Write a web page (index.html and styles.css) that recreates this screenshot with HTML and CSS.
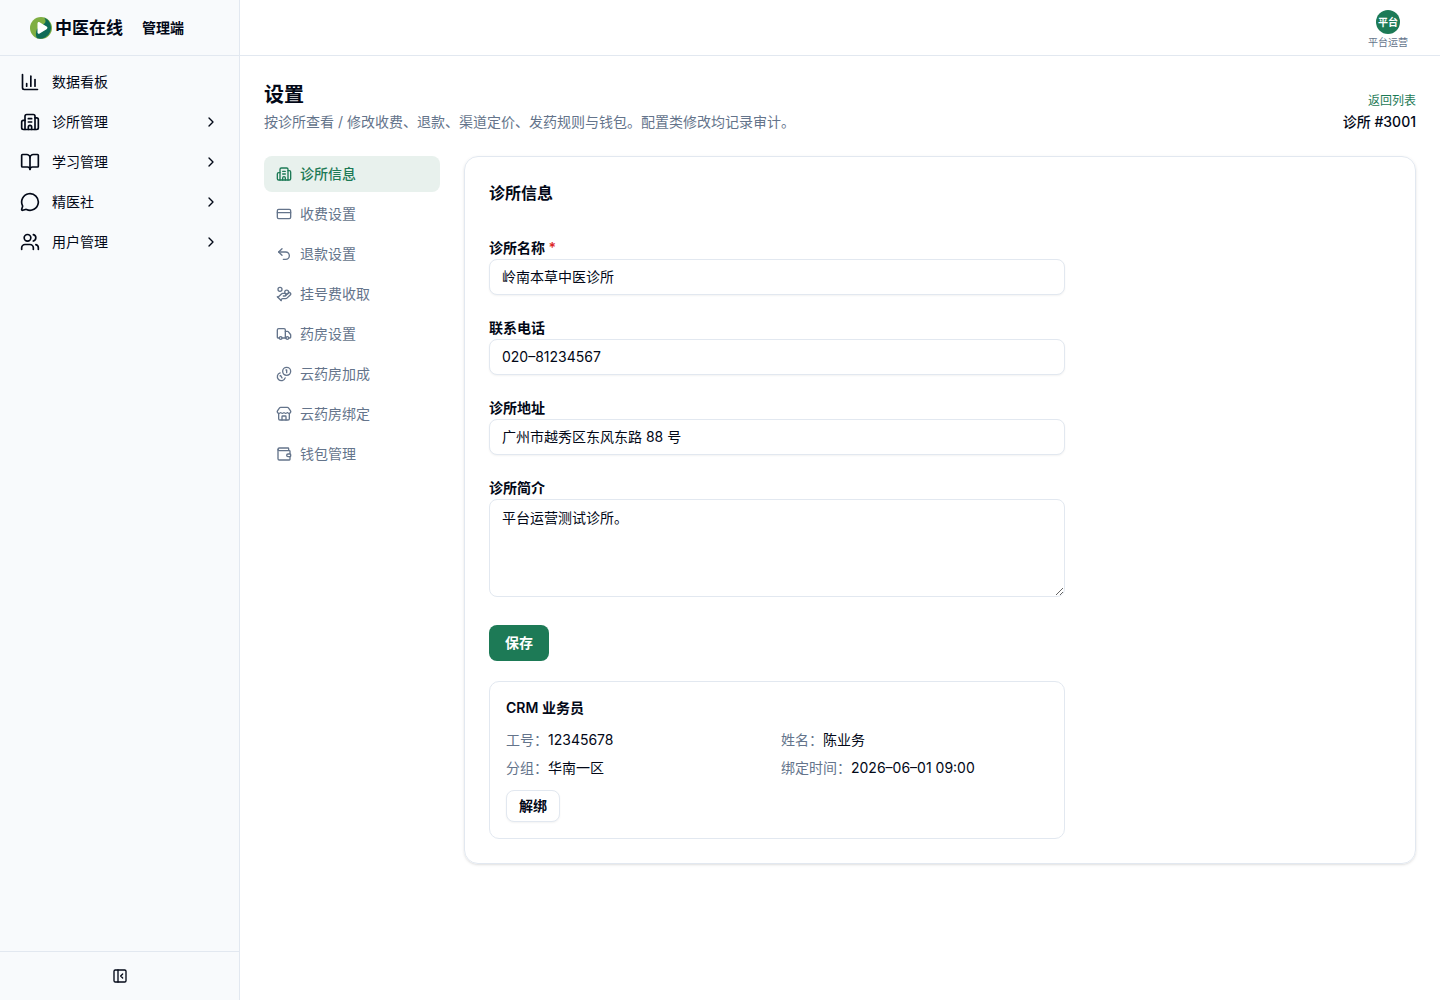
FILE: index.html
```html
<!DOCTYPE html>
<html lang="zh-CN">
<head>
<meta charset="utf-8">
<meta name="viewport" content="width=device-width, initial-scale=1">
<title>设置 - 中医在线管理端</title>
<link rel="stylesheet" href="styles.css">
</head>
<body>
<div class="app">
  <aside class="sidebar">
    <div class="brand">
      <svg class="brand-mark" viewBox="0 0 22 22" aria-hidden="true">
        <circle cx="11" cy="11" r="11" fill="#7fae42"/>
        <path d="M14 .42A11 11 0 0 1 7 21.250C5.400 18.500 5.600 15 7 12L15 6C16 4 15.500 2 14 .42Z" fill="#0f6b56"/>
        <path d="M7.500 6.600c0-1.300 1-1.900 2.100-1.300l7 4.200c1.100.7 1.100 2 0 2.700l-7 4.300c-1.100.6-2.100 0-2.100-1.300Z" fill="#fff"/>
      </svg>
      <span class="brand-name">中医在线</span>
      <span class="brand-role">管理端</span>
    </div>
    <nav class="menu" aria-label="主菜单">
      <a class="menu-item" href="#dashboard">
        <svg class="icon icon-lg" viewBox="0 0 24 24" aria-hidden="true"><path d="M3 3v16a2 2 0 0 0 2 2h16"/><path d="M18 17V9"/><path d="M13 17V5"/><path d="M8 17v-3"/></svg>
        <span class="menu-label">数据看板</span>
      </a>
      <button class="menu-item" type="button">
        <svg class="icon icon-lg" viewBox="0 0 24 24" aria-hidden="true"><path d="M10 12h4"/><path d="M10 8h4"/><path d="M14 21v-3a2 2 0 0 0-4 0v3"/><path d="M6 10H4a2 2 0 0 0-2 2v7a2 2 0 0 0 2 2h16a2 2 0 0 0 2-2V9a2 2 0 0 0-2-2h-2"/><path d="M6 21V5a2 2 0 0 1 2-2h8a2 2 0 0 1 2 2v16"/></svg>
        <span class="menu-label">诊所管理</span>
        <svg class="icon" viewBox="0 0 24 24" aria-hidden="true"><path d="m9 18 6-6-6-6"/></svg>
      </button>
      <button class="menu-item" type="button">
        <svg class="icon icon-lg" viewBox="0 0 24 24" aria-hidden="true"><path d="M12 7v14"/><path d="M3 18a1 1 0 0 1-1-1V4a1 1 0 0 1 1-1h5a4 4 0 0 1 4 4 4 4 0 0 1 4-4h5a1 1 0 0 1 1 1v13a1 1 0 0 1-1 1h-6a3 3 0 0 0-3 3 3 3 0 0 0-3-3z"/></svg>
        <span class="menu-label">学习管理</span>
        <svg class="icon" viewBox="0 0 24 24" aria-hidden="true"><path d="m9 18 6-6-6-6"/></svg>
      </button>
      <button class="menu-item" type="button">
        <svg class="icon icon-lg" viewBox="0 0 24 24" aria-hidden="true"><path d="M2.992 16.342a2 2 0 0 1 .094 1.167l-1.065 3.290a1 1 0 0 0 1.236 1.168l3.413-.998a2 2 0 0 1 1.099.092 10 10 0 1 0-4.777-4.719"/></svg>
        <span class="menu-label">精医社</span>
        <svg class="icon" viewBox="0 0 24 24" aria-hidden="true"><path d="m9 18 6-6-6-6"/></svg>
      </button>
      <button class="menu-item" type="button">
        <svg class="icon icon-lg" viewBox="0 0 24 24" aria-hidden="true"><path d="M16 21v-2a4 4 0 0 0-4-4H6a4 4 0 0 0-4 4v2"/><path d="M16 3.128a4 4 0 0 1 0 7.744"/><path d="M22 21v-2a4 4 0 0 0-3-3.870"/><circle cx="9" cy="7" r="4"/></svg>
        <span class="menu-label">用户管理</span>
        <svg class="icon" viewBox="0 0 24 24" aria-hidden="true"><path d="m9 18 6-6-6-6"/></svg>
      </button>
    </nav>
    <div class="sidebar-foot">
      <button class="collapse" type="button" aria-label="收起侧栏">
        <svg class="icon" viewBox="0 0 24 24" aria-hidden="true"><rect x="3" y="3" width="18" height="18" rx="2"/><path d="M9 3v18"/><path d="m16 15-3-3 3-3"/></svg>
      </button>
    </div>
  </aside>

  <div class="content">
    <header class="topbar">
      <button class="account" type="button">
        <span class="avatar">平台</span>
        <span class="account-name">平台运营</span>
      </button>
    </header>

    <main class="page">
      <div class="page-head">
        <div class="page-heading">
          <h1 class="page-title">设置</h1>
          <p class="page-desc">按诊所查看 / 修改收费、退款、渠道定价、发药规则与钱包。配置类修改均记录审计。</p>
        </div>
        <div class="page-context">
          <a class="back-link" href="#clinics">返回列表</a>
          <span class="clinic-id">诊所 #3001</span>
        </div>
      </div>

      <div class="settings">
        <nav class="tabs" aria-label="设置分类">
          <a class="tab tab-active" href="#info" aria-current="page">
            <svg class="icon" viewBox="0 0 24 24" aria-hidden="true"><path d="M10 12h4"/><path d="M10 8h4"/><path d="M14 21v-3a2 2 0 0 0-4 0v3"/><path d="M6 10H4a2 2 0 0 0-2 2v7a2 2 0 0 0 2 2h16a2 2 0 0 0 2-2V9a2 2 0 0 0-2-2h-2"/><path d="M6 21V5a2 2 0 0 1 2-2h8a2 2 0 0 1 2 2v16"/></svg>
            <span>诊所信息</span>
          </a>
          <a class="tab" href="#charge">
            <svg class="icon" viewBox="0 0 24 24" aria-hidden="true"><rect x="2" y="5" width="20" height="14" rx="2"/><path d="M2 10h20"/></svg>
            <span>收费设置</span>
          </a>
          <a class="tab" href="#refund">
            <svg class="icon" viewBox="0 0 24 24" aria-hidden="true"><path d="M9 14 4 9l5-5"/><path d="M4 9h10.500a5.500 5.500 0 0 1 5.500 5.500a5.500 5.500 0 0 1-5.500 5.500H11"/></svg>
            <span>退款设置</span>
          </a>
          <a class="tab" href="#registration">
            <svg class="icon" viewBox="0 0 24 24" aria-hidden="true"><path d="M11 15h2a2 2 0 1 0 0-4h-3c-.6 0-1.100.2-1.400.6L3 17"/><path d="m7 21 1.600-1.400c.3-.4.8-.6 1.400-.6h4c1.100 0 2.100-.4 2.800-1.200l4.600-4.400a2 2 0 0 0-2.750-2.910l-4.200 3.900"/><path d="m2 16 6 6"/><circle cx="16" cy="9" r="2.900"/><circle cx="6" cy="5" r="3"/></svg>
            <span>挂号费收取</span>
          </a>
          <a class="tab" href="#pharmacy">
            <svg class="icon" viewBox="0 0 24 24" aria-hidden="true"><path d="M14 18V6a2 2 0 0 0-2-2H4a2 2 0 0 0-2 2v11a1 1 0 0 0 1 1h2"/><path d="M15 18H9"/><path d="M19 18h2a1 1 0 0 0 1-1v-3.650a1 1 0 0 0-.22-.624l-3.480-4.350A1 1 0 0 0 17.520 8H14"/><circle cx="17" cy="18" r="2"/><circle cx="7" cy="18" r="2"/></svg>
            <span>药房设置</span>
          </a>
          <a class="tab" href="#markup">
            <svg class="icon" viewBox="0 0 24 24" aria-hidden="true"><path d="M13.744 17.736a6 6 0 1 1-7.480-7.480"/><path d="M15 6h1v4"/><path d="m6.134 14.768.866-.5 2 3.464"/><circle cx="16" cy="8" r="6"/></svg>
            <span>云药房加成</span>
          </a>
          <a class="tab" href="#binding">
            <svg class="icon" viewBox="0 0 24 24" aria-hidden="true"><path d="M15 21v-5a1 1 0 0 0-1-1h-4a1 1 0 0 0-1 1v5"/><path d="M17.774 10.310a1.120 1.120 0 0 0-1.549 0 2.500 2.500 0 0 1-3.451 0 1.120 1.120 0 0 0-1.548 0 2.500 2.500 0 0 1-3.452 0 1.120 1.120 0 0 0-1.549 0 2.500 2.500 0 0 1-3.770-3.248l2.889-4.184A2 2 0 0 1 7 2h10a2 2 0 0 1 1.653.873l2.895 4.192a2.500 2.500 0 0 1-3.774 3.244"/><path d="M4 10.950V19a2 2 0 0 0 2 2h12a2 2 0 0 0 2-2v-8.050"/></svg>
            <span>云药房绑定</span>
          </a>
          <a class="tab" href="#wallet">
            <svg class="icon" viewBox="0 0 24 24" aria-hidden="true"><path d="M19 7V4a1 1 0 0 0-1-1H5a2 2 0 0 0 0 4h15a1 1 0 0 1 1 1v4h-3a2 2 0 0 0 0 4h3a1 1 0 0 0 1-1v-2a1 1 0 0 0-1-1"/><path d="M3 5v14a2 2 0 0 0 2 2h15a1 1 0 0 0 1-1v-4"/></svg>
            <span>钱包管理</span>
          </a>
        </nav>

        <section class="card">
          <h2 class="card-title">诊所信息</h2>
          <form class="form">
            <div class="field">
              <label class="label" for="clinic-name">诊所名称 <span class="required">*</span></label>
              <input class="input" id="clinic-name" type="text" value="岭南本草中医诊所" required>
            </div>
            <div class="field">
              <label class="label" for="clinic-phone">联系电话</label>
              <input class="input" id="clinic-phone" type="text" value="020–81234567">
            </div>
            <div class="field">
              <label class="label" for="clinic-address">诊所地址</label>
              <input class="input" id="clinic-address" type="text" value="广州市越秀区东风东路 88 号">
            </div>
            <div class="field">
              <label class="label" for="clinic-intro">诊所简介</label>
              <textarea class="input textarea" id="clinic-intro">平台运营测试诊所。</textarea>
            </div>
            <div class="actions">
              <button class="btn btn-primary" type="button">保存</button>
            </div>
          </form>

          <section class="crm">
            <h3 class="crm-title">CRM 业务员</h3>
            <dl class="crm-grid">
              <div class="crm-item"><dt>工号：</dt><dd>12345678</dd></div>
              <div class="crm-item"><dt>姓名：</dt><dd>陈业务</dd></div>
              <div class="crm-item"><dt>分组：</dt><dd>华南一区</dd></div>
              <div class="crm-item"><dt>绑定时间：</dt><dd>2026–06–01 09:00</dd></div>
            </dl>
            <button class="btn btn-outline" type="button">解绑</button>
          </section>
        </section>
      </div>
    </main>
  </div>
</div>
</body>
</html>
```
FILE: styles.css
```css
:root {
  --text: #020817;
  --muted: #64748b;
  --border: #e2e8f0;
  --surface: #f8fafc;
  --primary: #1d7a56;
  --primary-soft: #e8f1ed;
  --danger: #dc2626;
}

*, *::before, *::after { box-sizing: border-box; }

body {
  margin: 0;
  background: #fff;
  color: var(--text);
  font-family: Inter, "Noto Sans CJK SC", sans-serif;
  font-size: 14px;
  line-height: 20px;
}

h1, h2, h3, p, dl, dd { margin: 0; }
a { color: inherit; text-decoration: none; }
button, input, textarea { font: inherit; color: inherit; }
button { border: 0; background: none; padding: 0; cursor: pointer; }

.icon {
  flex: none;
  width: 16px;
  height: 16px;
  fill: none;
  stroke: currentColor;
  stroke-width: 2;
  stroke-linecap: round;
  stroke-linejoin: round;
}
.icon-lg { width: 20px; height: 20px; }

.app { display: flex; min-height: 100vh; }

/* Sidebar */
.sidebar {
  display: flex;
  flex: none;
  flex-direction: column;
  width: 240px;
  background: var(--surface);
  border-right: 1px solid var(--border);
}
.brand {
  display: flex;
  align-items: center;
  height: 56px;
  padding-left: 30px;
  border-bottom: 1px solid var(--border);
}
.brand-mark { width: 22px; height: 22px; margin-right: 3px; }
.brand-name { font-size: 17px; font-weight: 600; margin-right: 19px; }
.brand-role { font-weight: 600; }
.menu {
  display: flex;
  flex: 1;
  flex-direction: column;
  gap: 4px;
  padding: 8px;
}
.menu-item {
  display: flex;
  align-items: center;
  gap: 12px;
  height: 36px;
  padding: 0 12px;
  border-radius: 8px;
  text-align: left;
}
.menu-label { flex: 1; }
.sidebar-foot {
  display: flex;
  justify-content: center;
  padding: 8px;
  border-top: 1px solid var(--border);
}
.collapse { display: grid; place-items: center; width: 32px; height: 32px; }

/* Top bar */
.content { flex: 1; min-width: 0; }
.topbar {
  display: flex;
  align-items: center;
  justify-content: flex-end;
  height: 56px;
  padding: 2px 32px 0;
  border-bottom: 1px solid var(--border);
}
.account { display: flex; flex-direction: column; align-items: center; gap: 2px; }
.avatar {
  display: grid;
  place-items: center;
  width: 24px;
  height: 24px;
  border-radius: 50%;
  background: var(--primary);
  color: #fff;
  font-size: 10px;
  font-weight: 600;
}
.account-name { color: var(--muted); font-size: 10px; line-height: 12px; }

/* Page */
.page { padding: 24px; }
.page-head {
  display: flex;
  align-items: flex-end;
  justify-content: space-between;
  margin-bottom: 24px;
}
.page-heading, .page-context { display: flex; flex-direction: column; gap: 2px; }
.page-context { align-items: flex-end; }
.page-title { font-size: 20px; font-weight: 600; line-height: 30px; }
.page-desc { color: var(--muted); }
.back-link { color: var(--primary); font-size: 12px; line-height: 18px; }
.clinic-id { font-weight: 500; }

.settings { display: flex; align-items: flex-start; gap: 24px; }
.tabs {
  display: flex;
  flex: none;
  flex-direction: column;
  gap: 4px;
  width: 176px;
}
.tab {
  display: flex;
  align-items: center;
  gap: 8px;
  height: 36px;
  padding: 0 12px;
  border-radius: 8px;
  color: var(--muted);
}
.tab-active { background: var(--primary-soft); color: var(--primary); font-weight: 500; }

.card {
  flex: 1;
  min-width: 0;
  padding: 24px;
  border: 1px solid var(--border);
  border-radius: 14px;
  box-shadow: 0 1px 3px rgb(0 0 0 / 10%), 0 1px 2px -1px rgb(0 0 0 / 10%);
}
.card-title { margin-bottom: 32px; font-size: 16px; font-weight: 600; line-height: 24px; }

.form { display: flex; flex-direction: column; gap: 22px; max-width: 576px; margin-bottom: 20px; }
.field { display: flex; flex-direction: column; }
.label { font-weight: 600; line-height: 22px; }
.required { color: var(--danger); }
.input {
  width: 100%;
  height: 36px;
  padding: 0 12px 2px;
  border: 1px solid var(--border);
  border-radius: 8px;
  background: #fff;
  box-shadow: 0 1px 2px rgb(0 0 0 / 5%);
}
.textarea { display: block; height: 98px; padding: 8px 12px; resize: vertical; box-shadow: none; }
.actions { padding-top: 6px; }

.btn { border-radius: 8px; font-weight: 600; }
.btn-primary { height: 36px; padding: 0 16px; background: var(--primary); color: #fff; }
.btn-outline {
  height: 32px;
  padding: 0 12px;
  border: 1px solid var(--border);
  background: #fff;
  box-shadow: 0 1px 2px rgb(0 0 0 / 5%);
}

.crm {
  max-width: 576px;
  padding: 16px;
  border: 1px solid var(--border);
  border-radius: 10px;
}
.crm-title { font-size: 14px; font-weight: 600; }
.crm-grid {
  display: grid;
  grid-template-columns: 1fr 1fr;
  gap: 8px;
  margin: 12px 0;
}
.crm-item { display: flex; }
.crm-item dt { color: var(--muted); }
```
